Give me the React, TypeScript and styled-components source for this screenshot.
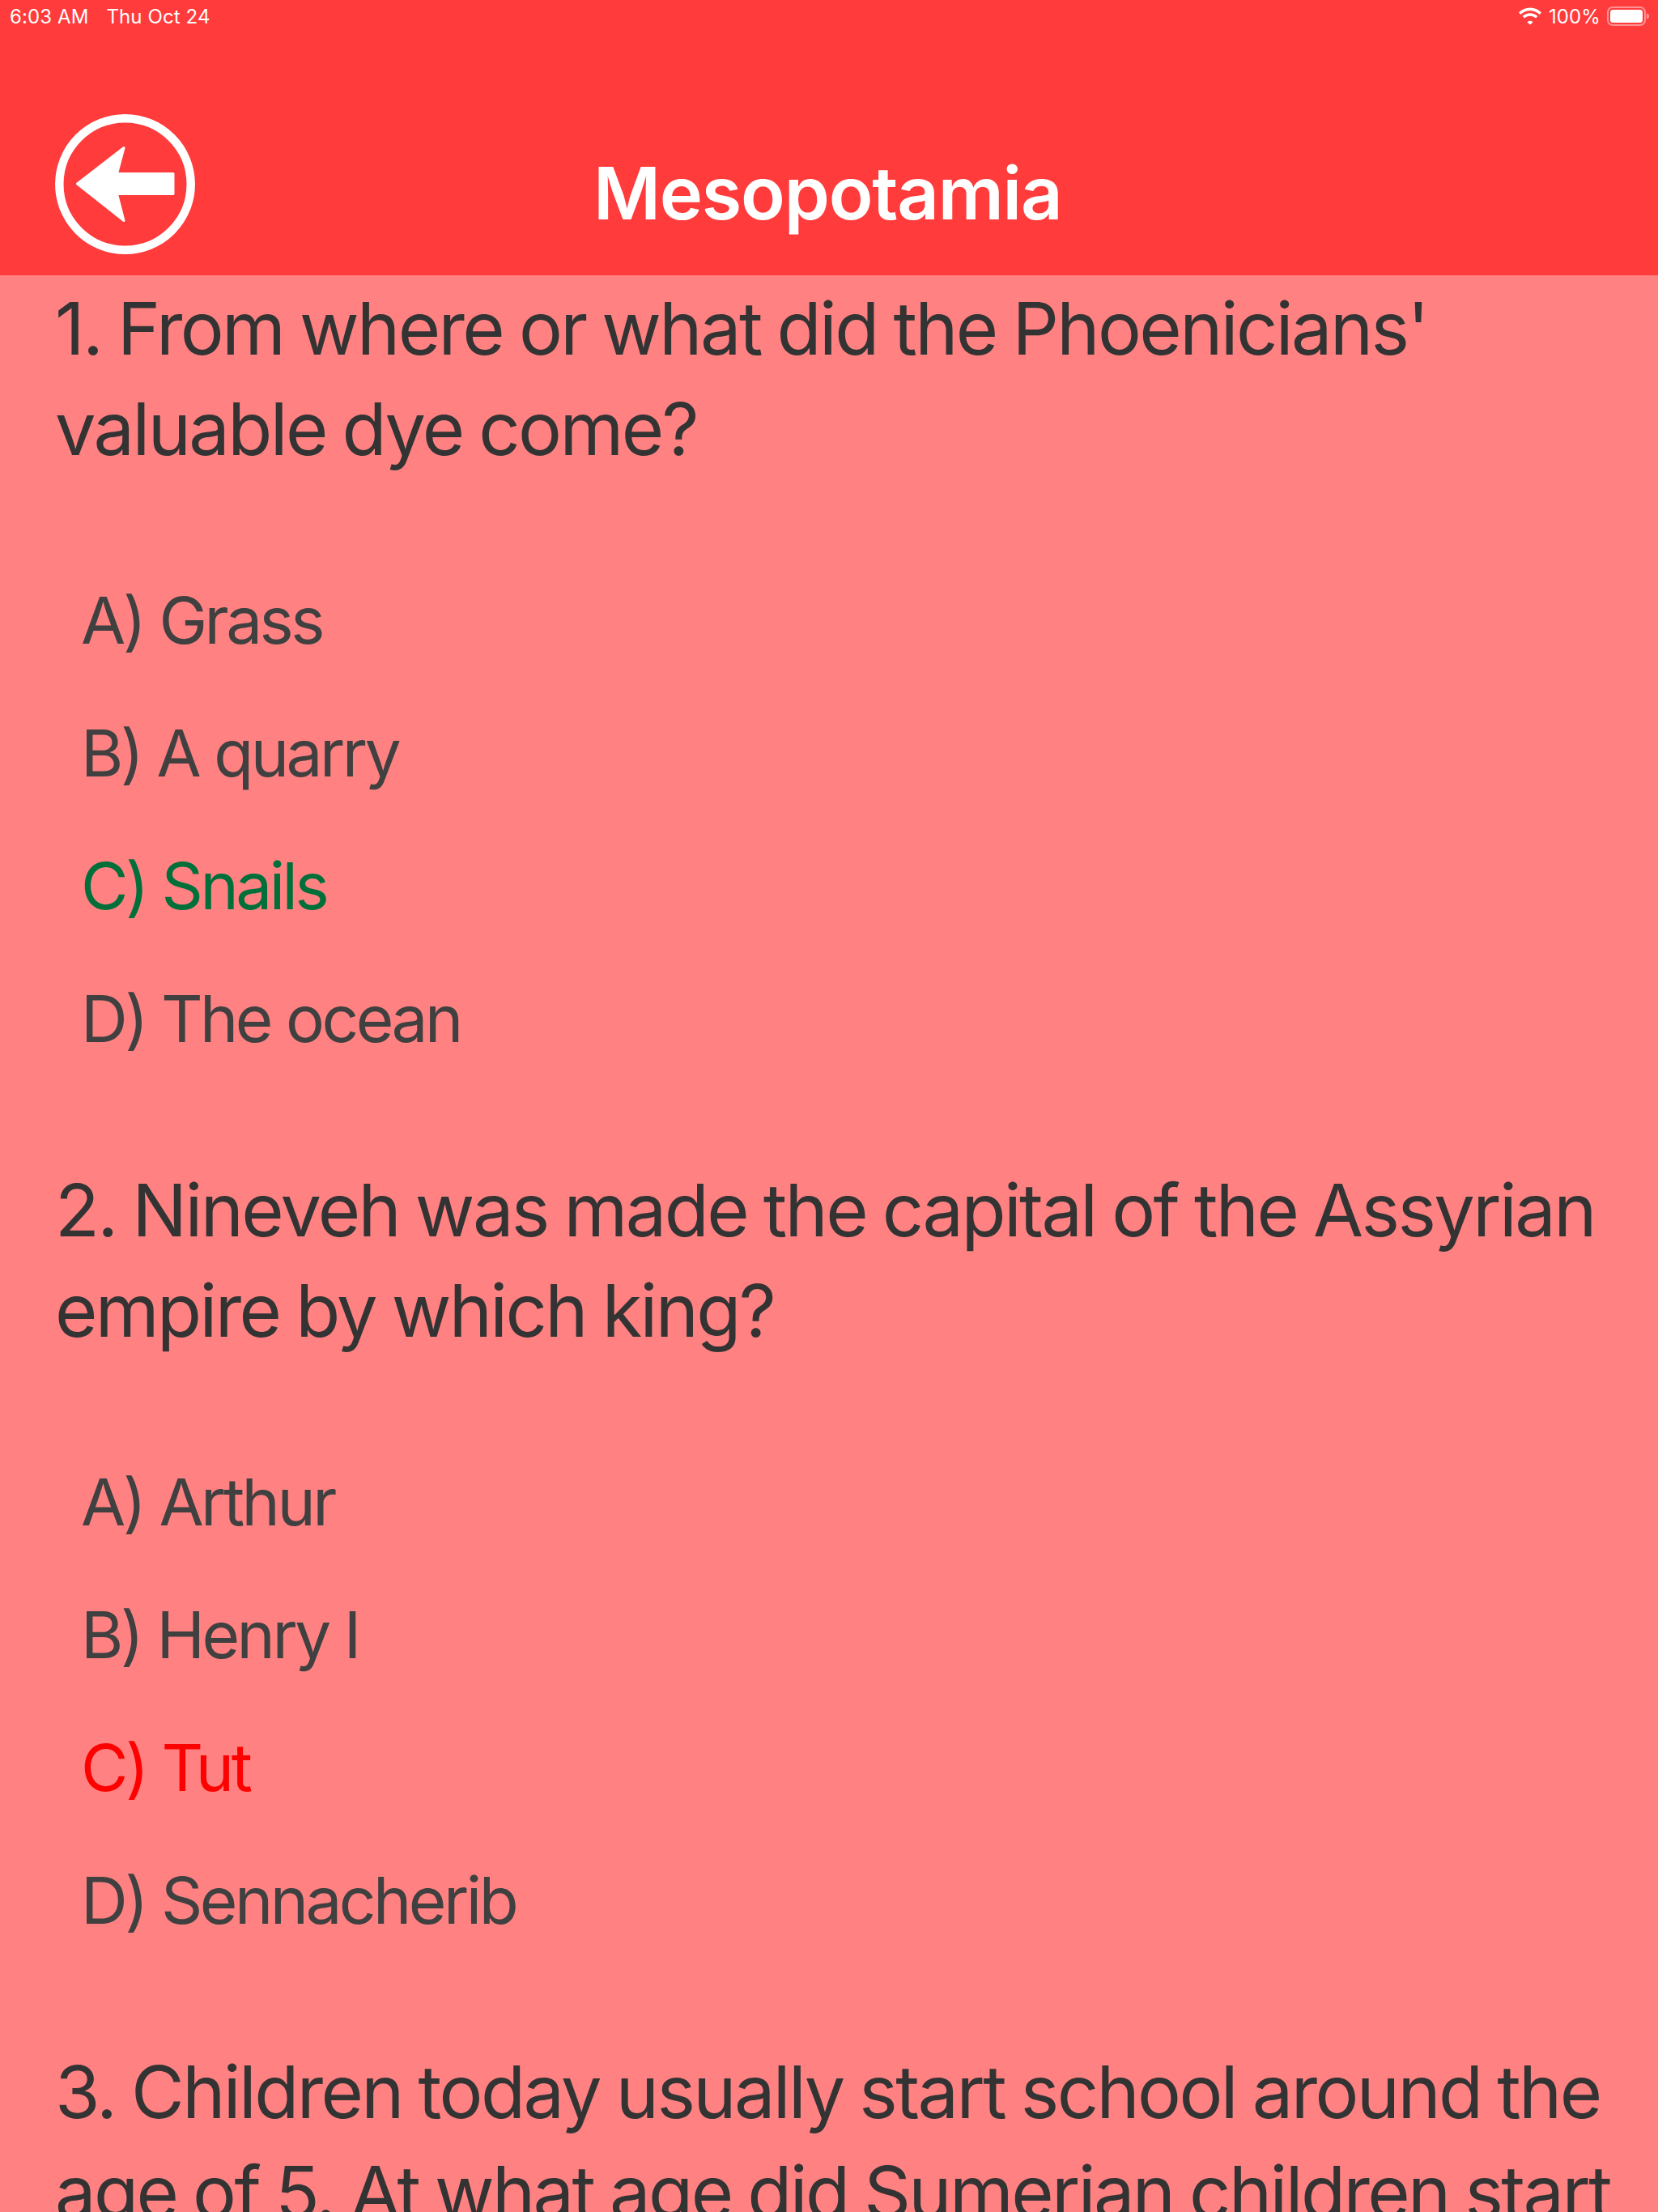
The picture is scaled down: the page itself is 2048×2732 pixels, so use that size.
import React from "react";
import styled, { createGlobalStyle } from "styled-components";

const Global = createGlobalStyle`
  html, body { margin: 0; padding: 0; background: #ff8181; }
  body { font-family: Inter, "Noto Sans", sans-serif; }
`;
const Page = styled.div`
  width: 2048px; height: 2732px; overflow: hidden; display: flex; flex-direction: column; background: #ff8181;
`;
const Header = styled.header`
  height: 340px; flex: none; background: #ff3b3b; color: #fff; display: flex; flex-direction: column; position: relative;
`;
const StatusBar = styled.div`
  height: 40px; display: flex; align-items: center; justify-content: space-between; padding: 0 10px 0 12px;
  font-size: 24px; letter-spacing: 0.1px;
`;
const StatusGroup = styled.div`display: flex; align-items: center; gap: ${p => p.$gap ?? 22}px;`;
const NavBar = styled.div`
  flex: 1; display: flex; align-items: flex-start; padding: 101px 0 0 68px;
`;
const Title = styled.h1`
  margin: 0; position: absolute; left: 733px; top: 185px; font-size: 90px; line-height: 108px; font-weight: 600; letter-spacing: -1.2px;
`;
const Content = styled.main`padding: 4px 30px 0 68px; flex: 1; overflow: hidden;`;
const QuestionBlock = styled.section`margin-bottom: 94px;`;
const Question = styled.p`
  margin: 0; font-size: 90px; line-height: 124px; color: #333; letter-spacing: -2.6px; word-spacing: -3px; font-weight: 400; white-space: nowrap;
`;
const Answers = styled.ul`list-style: none; margin: 91px 0 0; padding: 0 0 0 32px;`;
const Answer = styled.li`
  height: 164px; display: flex; align-items: center; font-size: 80px; letter-spacing: -3.5px; color: ${p => p.$c || "#404040"}; white-space: nowrap;
`;
const data = [
  { q: ["1. From where or what did the Phoenicians'", "valuable dye come?"], a: ["A) Grass", "B) A quarry", "C) Snails", "D) The ocean"], c: { 2: "#006f3a" } },
  { q: ["2. Nineveh was made the capital of the Assyrian", "empire by which king?"], a: ["A) Arthur", "B) Henry I", "C) Tut", "D) Sennacherib"], c: { 2: "#ff0000" } },
  { q: ["3. Children today usually start school around the", "age of 5. At what age did Sumerian children start"], a: [], c: {} },
];
export default function App() {
  return (
    <Page>
      <Global />
      <Header>
        <StatusBar>
          <StatusGroup><span>6:03 AM</span><span>Thu Oct 24</span></StatusGroup>
          <StatusGroup $gap={8}>
            <svg width="30" height="22" viewBox="0 0 30 22"><path fill="#fff" d="M15 4.200c4.500 0 8.600 1.800 11.700 4.700l2.300-2.500C25.300 2.800 20.400.6 15 .6S4.700 2.800 1 6.400l2.300 2.500C6.400 6 10.500 4.200 15 4.200zm0 6.600c2.700 0 5.200 1.100 7 2.800l2.400-2.500c-2.500-2.400-5.800-3.800-9.400-3.800s-6.900 1.400-9.400 3.800l2.400 2.500c1.800-1.700 4.300-2.800 7-2.800zm0 5.900c-1.400 0-2.700.6-3.700 1.500L15 21.500l3.700-3.300c-1-.9-2.300-1.500-3.700-1.500z"/></svg>
            <span>100%</span>
            <svg width="53" height="24" viewBox="0 0 53 24"><rect x="1" y="1" width="46" height="22" rx="6" fill="none" stroke="#fff" strokeOpacity=".45" strokeWidth="2"/><rect x="4" y="4" width="40" height="16" rx="3.500" fill="#fff"/><path d="M49 8.500c2 .4 3 1.800 3 3.500s-1 3.100-3 3.500z" fill="#fff" fillOpacity=".5"/></svg>
          </StatusGroup>
        </StatusBar>
        <NavBar>
          <svg width="173" height="173" viewBox="0 0 173 173">
            <circle cx="86.500" cy="86.500" r="81.200" fill="none" stroke="#fff" strokeWidth="10.500"/>
            <path fill="#fff" stroke="#fff" strokeWidth="3" strokeLinejoin="round" d="M27.500 86 L85 41.500 L76.500 73.500 H146 V98.500 H76.500 L85 131.500 Z"/>
          </svg>
        </NavBar>
        <Title>Mesopotamia</Title>
      </Header>
      <Content>
        {data.map((d, i) => (
          <QuestionBlock key={i}>
            {d.q.map(l => <Question key={l}>{l}</Question>)}
            {d.a.length > 0 && (
              <Answers>
                {d.a.map((a, j) => <Answer key={a} $c={d.c[j]}>{a}</Answer>)}
              </Answers>
            )}
          </QuestionBlock>
        ))}
      </Content>
    </Page>
  );
}
